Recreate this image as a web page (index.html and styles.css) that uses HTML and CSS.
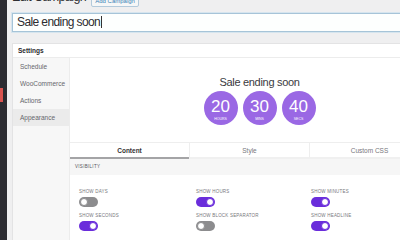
FILE: index.html
```html
<!DOCTYPE html>
<html lang="en">
<head>
    <meta charset="UTF-8">
    <title>Edit Campaign</title>
    <link rel="stylesheet" href="styles.css">
</head>
<body>
    <div class="adminbar"><span class="notice"></span></div>
    <div class="wrap">
        <div class="page-head">
            <h1>Edit Campaign</h1>
            <span class="add-btn">Add Campaign</span>
        </div>

        <div class="title-input">Sale ending soon<span class="caret"></span></div>

        <div class="settings">
            <div class="settings-head">Settings</div>
            <div class="settings-body">
                <ul class="nav">
                    <li>Schedule</li>
                    <li>WooCommerce</li>
                    <li>Actions</li>
                    <li class="active">Appearance</li>
                </ul>
                <div class="panel">
                    <div class="preview">
                        <div class="headline">Sale ending soon</div>
                        <div class="timer">
                            <div class="block"><span class="num">20</span><span class="unit">Hours</span></div>
                            <div class="block"><span class="num">30</span><span class="unit">Mins</span></div>
                            <div class="block"><span class="num">40</span><span class="unit">Secs</span></div>
                        </div>
                    </div>
                    <div class="tabs">
                        <div class="tab active">Content</div>
                        <div class="tab">Style</div>
                        <div class="tab">Custom CSS</div>
                    </div>
                    <div class="section-bar">Visibility</div>
                    <div class="options">
                        <div class="option"><span class="label">Show days</span><span class="toggle"></span></div>
                        <div class="option"><span class="label">Show hours</span><span class="toggle on"></span></div>
                        <div class="option"><span class="label">Show minutes</span><span class="toggle on"></span></div>
                        <div class="option"><span class="label">Show seconds</span><span class="toggle on"></span></div>
                        <div class="option"><span class="label">Show block separator</span><span class="toggle"></span></div>
                        <div class="option"><span class="label">Show headline</span><span class="toggle on"></span></div>
                    </div>
                </div>
            </div>
        </div>
    </div>
</body>
</html>
```

FILE: styles.css
```css
body {
    margin: 0;
    width: 400px;
    height: 240px;
    overflow: hidden;
    display: flex;
    background-color: #efeff0;
    font-family: "Liberation Sans", Arial, sans-serif;
    color: #2a2a2e;
}
.adminbar {
    width: 7px;
    flex-shrink: 0;
    background-color: #2b2b31;
    position: relative;
}
.notice {
    position: absolute;
    left: 0;
    top: 88px;
    width: 3px;
    height: 14px;
    background-color: #d9534f;
}
.wrap {
    flex: 1;
    padding-left: 5px;
    min-width: 0;
}
.page-head {
    display: flex;
    align-items: flex-end;
    gap: 5px;
    height: 18px;
    margin-top: -11px;
}
.page-head h1 {
    margin: 0 0 3px 0;
    font-size: 12.5px;
    line-height: 14px;
    letter-spacing: -0.6px;
    font-weight: 400;
    color: #2f2f33;
}
.add-btn {
    font-size: 6px;
    color: #3b83b8;
    border: 1px solid #b3cadb;
    padding: 2px 3px;
    border-radius: 2px;
    background: #f6f7f7;
}
.title-input {
    margin-top: 6px;
    height: 17px;
    margin-right: -4px;
    border: 1px solid #a6c4d8;
    box-shadow: 0 0 0 1px #d6e5ee;
    background-color: #fdfffe;
    font-size: 12px;
    letter-spacing: -0.6px;
    line-height: 17px;
    padding-left: 4px;
    color: #2c2c30;
}
.caret {
    display: inline-block;
    width: 1px;
    height: 12px;
    margin-left: 1px;
    background: #333;
    vertical-align: -2px;
}
.settings {
    margin-top: 11px;
    margin-right: -4px;
    background-color: #fff;
    border: 1px solid #e3e3e4;
}
.settings-head {
    height: 13px;
    line-height: 13px;
    font-size: 6.5px;
    font-weight: bold;
    padding-left: 5px;
    border-bottom: 1px solid #ececec;
}
.settings-body {
    display: flex;
}
.nav {
    list-style: none;
    margin: 0;
    padding: 0;
    width: 56px;
    flex-shrink: 0;
    background-color: #f7f7f7;
    border-right: 1px solid #ececec;
    height: 190px;
}
.nav li {
    height: 17px;
    line-height: 18px;
    font-size: 6.5px;
    color: #66666c;
    padding-left: 7px;
}
.nav li.active {
    background-color: #ebebeb;
}
.panel {
    flex: 1;
}
.preview {
    height: 84px;
    display: flex;
    flex-direction: column;
    align-items: center;
    padding-left: 20px;
}
.headline {
    margin-top: 18px;
    font-size: 11px;
    line-height: 12px;
    letter-spacing: -0.3px;
    color: #3a3a3e;
}
.timer {
    display: flex;
    gap: 5px;
    margin-top: 3px;
}
.block {
    width: 34px;
    height: 34px;
    border-radius: 50%;
    background-color: #9a68e4;
    color: #fff;
    display: flex;
    flex-direction: column;
    align-items: center;
    justify-content: center;
}
.num {
    font-size: 17px;
    line-height: 17px;
    margin-top: 2px;
}
.unit {
    font-size: 3.5px;
    text-transform: uppercase;
    margin-top: 2px;
}
.tabs {
    display: flex;
    border-top: 1px solid #eeeeee;
}
.tab {
    width: 119px;
    flex-shrink: 0;
    height: 14px;
    line-height: 15px;
    text-align: center;
    font-size: 6.5px;
    color: #77777c;
    border-left: 1px solid #eeeeee;
    border-bottom: 2px solid #f0f0f0;
}
.tab:first-child {
    border-left: none;
}
.tab.active {
    font-weight: bold;
    color: #333;
    border-bottom-color: #a4a4a6;
}
.section-bar {
    height: 16px;
    line-height: 16px;
    background-color: #f6f6f6;
    font-size: 4.5px;
    letter-spacing: 0.3px;
    text-transform: uppercase;
    color: #55555a;
    padding-left: 5px;
}
.options {
    display: grid;
    grid-template-columns: 117px 115px 117px;
    row-gap: 6px;
    padding: 14px 0 0 9px;
}
.option {
    display: flex;
    flex-direction: column;
    gap: 3px;
}
.label {
    font-size: 4.5px;
    letter-spacing: 0.2px;
    text-transform: uppercase;
    color: #77777c;
}
.toggle {
    position: relative;
    width: 19px;
    height: 10px;
    border-radius: 5px;
    background-color: #8c8c8e;
}
.toggle::after {
    content: "";
    position: absolute;
    left: 1px;
    top: 1px;
    width: 6px;
    height: 6px;
    border-radius: 50%;
    background: #fff;
    border: 1px solid #8c8c8e;
}
.toggle.on {
    background-color: #6a2ddb;
}
.toggle.on::after {
    left: auto;
    right: 1px;
    border-color: #6a2ddb;
}
```
